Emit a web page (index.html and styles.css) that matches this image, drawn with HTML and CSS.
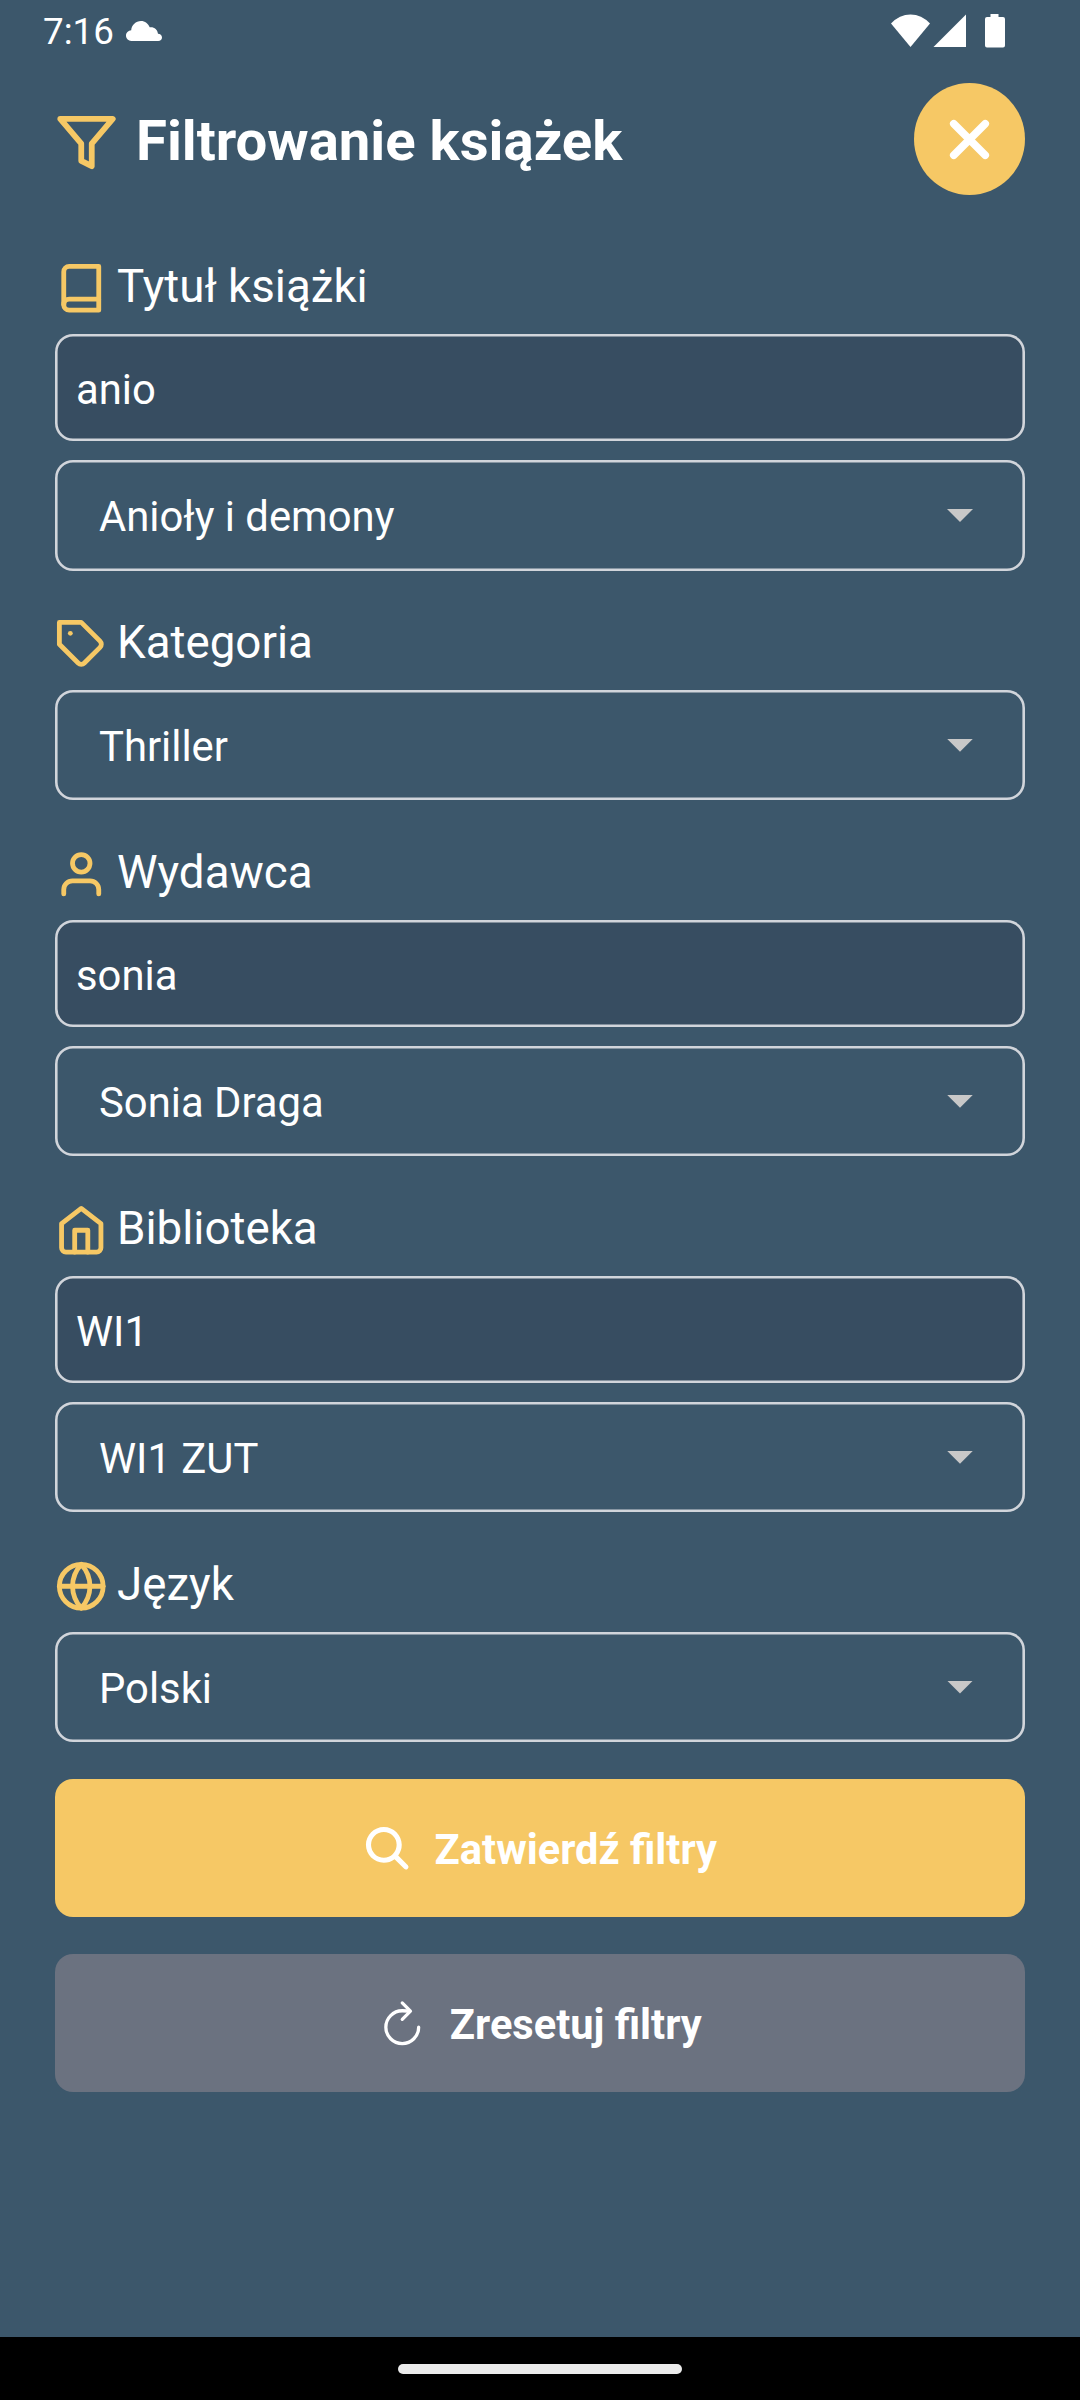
FILE: index.html
```html
<!DOCTYPE html>
<html lang="pl">
<head>
<meta charset="utf-8">
<title>Filtrowanie książek</title>
<link rel="stylesheet" href="styles.css">
</head>
<body>
<div class="screen">
  <div class="status">
    <span class="time">7:16</span>
    <svg class="cloud" width="36" height="20" viewBox="0 0 36 20"><path d="M5.5 20a5.4 5.4 0 0 1-.3-10.8C5.700 4 9.800 0 15 0c4 0 7.200 2.500 8.700 6.300 4.300-.6 7.800 2 8.300 6.500 2.200.2 4 1.500 4 3.600 0 2.100-1.600 3.600-3.800 3.600z"/></svg>
    <svg class="signals" width="116" height="35" viewBox="0 0 116 35"><path d="M0 9.500Q8.500 .5 19.500 .5T39 9.500L19.500 33z"/><path d="M75 .5V33H42.500z"/><path d="M99.500 0h8v3h4.500q2 0 2 2v26.500q0 2-2 2H96q-2 0-2-2V5q0-2 2-2h3.500z"/></svg>
  </div>
  <header class="header">
    <svg class="icon icon-lg" viewBox="0 0 24 24"><path d="M22 3H2l8 9.460V19l4 2v-8.540z"/></svg>
    <h1 class="title">Filtrowanie książek</h1>
    <button class="close" aria-label="Zamknij"><svg width="63" height="63" viewBox="0 0 24 24"><path d="M18 6L6 18M6 6l12 12"/></svg></button>
  </header>
  <main class="form">
    <div class="label"><svg class="icon" viewBox="0 0 24 24"><path d="M4 19.500A2.500 2.500 0 0 1 6.500 17H20"/><path d="M6.500 2H20v20H6.500A2.500 2.500 0 0 1 4 19.500v-15A2.500 2.500 0 0 1 6.500 2z"/></svg><span>Tytuł książki</span></div>
    <div class="field input">anio</div>
    <div class="field select"><span>Anioły i demony</span><i class="caret"></i></div>

    <div class="label"><svg class="icon" viewBox="0 0 24 24"><path d="M20.590 13.410l-7.170 7.170a2 2 0 0 1-2.830 0L2 12V2h10l8.590 8.590a2 2 0 0 1 0 2.820z"/><path d="M7 7h.01"/></svg><span>Kategoria</span></div>
    <div class="field select"><span>Thriller</span><i class="caret"></i></div>

    <div class="label"><svg class="icon" viewBox="0 0 24 24"><path d="M20 21v-2a4 4 0 0 0-4-4H8a4 4 0 0 0-4 4v2"/><circle cx="12" cy="7" r="4"/></svg><span>Wydawca</span></div>
    <div class="field input">sonia</div>
    <div class="field select"><span>Sonia Draga</span><i class="caret"></i></div>

    <div class="label"><svg class="icon" viewBox="0 0 24 24"><path d="M3 9l9-7 9 7v11a2 2 0 0 1-2 2H5a2 2 0 0 1-2-2z"/><path d="M9 22V12h6v10"/></svg><span>Biblioteka</span></div>
    <div class="field input">WI1</div>
    <div class="field select"><span>WI1 ZUT</span><i class="caret"></i></div>

    <div class="label"><svg class="icon" viewBox="0 0 24 24"><circle cx="12" cy="12" r="10"/><path d="M2 12h20"/><path d="M12 2a15.300 15.300 0 0 1 4 10 15.300 15.300 0 0 1-4 10 15.300 15.300 0 0 1-4-10 15.300 15.300 0 0 1 4-10z"/></svg><span>Język</span></div>
    <div class="field select"><span>Polski</span><i class="caret"></i></div>

    <button class="btn btn-primary"><svg class="btn-icon solid" viewBox="0 0 512 512"><path d="M456.690 421.390L362.600 327.300a173.810 173.810 0 0 0 34.840-104.580C397.440 126.380 319.060 48 222.720 48S48 126.380 48 222.720s78.380 174.720 174.720 174.720A173.810 173.810 0 0 0 327.300 362.600l94.090 94.090a25 25 0 0 0 35.300-35.300zM97.920 222.720a124.800 124.800 0 1 1 124.800 124.800 124.950 124.950 0 0 1-124.800-124.800z"/></svg><span>Zatwierdź filtry</span></button>
    <button class="btn btn-secondary"><svg class="btn-icon line" viewBox="0 0 512 512"><path d="M320 146s24.360-12-64-12a160 160 0 1 0 160 160"/><path d="M256 58l80 80-80 80"/></svg><span>Zresetuj filtry</span></button>
  </main>
  <div class="navbar"><div class="handle"></div></div>
</div>
</body>
</html>
```
FILE: styles.css
```css
* { box-sizing: border-box; }
body { margin: 0; }
.screen {
  width: 1080px;
  height: 2400px;
  display: flex;
  flex-direction: column;
  background: #3c576b;
  color: #fff;
  font-family: Roboto, "Noto Sans", sans-serif;
}
.status {
  height: 63px;
  padding: 0 73px 0 43px;
  display: flex;
  align-items: center;
}
.time { font-size: 36.75px; line-height: 44px; }
.cloud { margin: 0 0 2px 12px; fill: #fff; }
.signals { margin-left: auto; fill: #fff; }
.header {
  height: 198px;
  padding: 20px 55px 0;
  display: flex;
  align-items: flex-start;
}
.icon {
  flex: none;
  width: 52.5px;
  height: 52.5px;
  fill: none;
  stroke: #f6c865;
  stroke-width: 2.2;
  stroke-linecap: round;
  stroke-linejoin: round;
}
.icon-lg { width: 63px; height: 63px; margin-top: 28px; }
.title {
  margin: 25px 0 0 18px;
  font-size: 56.3px;
  line-height: 66px;
  font-weight: 700;
}
.close {
  margin-left: auto;
  width: 111px;
  height: 112px;
  padding: 0;
  border: 0;
  border-radius: 50%;
  background: #f6c865;
  display: flex;
  align-items: center;
  justify-content: center;
}
.close svg { fill: none; stroke: #fff; stroke-width: 2.9; stroke-linecap: round; }
.form { flex: 1; padding: 0 55px; display: flex; flex-direction: column; }
.label {
  flex: none;
  height: 73.2px;
  display: flex;
  align-items: flex-start;
  padding-top: 1px;
  font-size: 45.7px;
  line-height: 49px;
}
.label span { margin-left: 9.5px; }
.select + .label { height: 119.5px; padding-top: 47.6px; }
.field {
  flex: none;
  border-radius: 18px;
  box-shadow: inset 0 0 0 2.6px #d1d5db;
  font-size: 41.8px;
  display: flex;
  align-items: center;
}
.input { height: 107px; padding: 4px 21px 0; background: #374d61; }
.select { height: 110.25px; padding: 2px 52px 0 44px; justify-content: space-between; }
.input + .select { margin-top: 19.25px; }
.caret {
  width: 26px;
  height: 13px;
  margin-top: -2px;
  background: #c8c8c8;
  clip-path: polygon(0 0, 100% 0, 50% 100%);
}
.btn {
  flex: none;
  height: 138px;
  margin-top: 37px;
  padding: 0 2px 0 0;
  border: 0;
  border-radius: 18px;
  color: #fff;
  font: 700 41.6px Roboto, "Noto Sans", sans-serif;
  display: flex;
  align-items: center;
  justify-content: center;
  gap: 21px;
}
.btn span { padding-top: 3px; }
.btn-primary { background: #f6c865; }
.btn-secondary { background: #6b7280; }
.btn-icon { width: 52.5px; height: 52.5px; }
.solid { fill: #fff; }
.line { fill: none; stroke: #fff; stroke-width: 32; stroke-linecap: round; stroke-linejoin: round; }
.navbar { height: 63px; background: #000; display: flex; justify-content: center; }
.handle { width: 284px; height: 10px; margin-top: 27px; border-radius: 5px; background: #ebebeb; }
```
